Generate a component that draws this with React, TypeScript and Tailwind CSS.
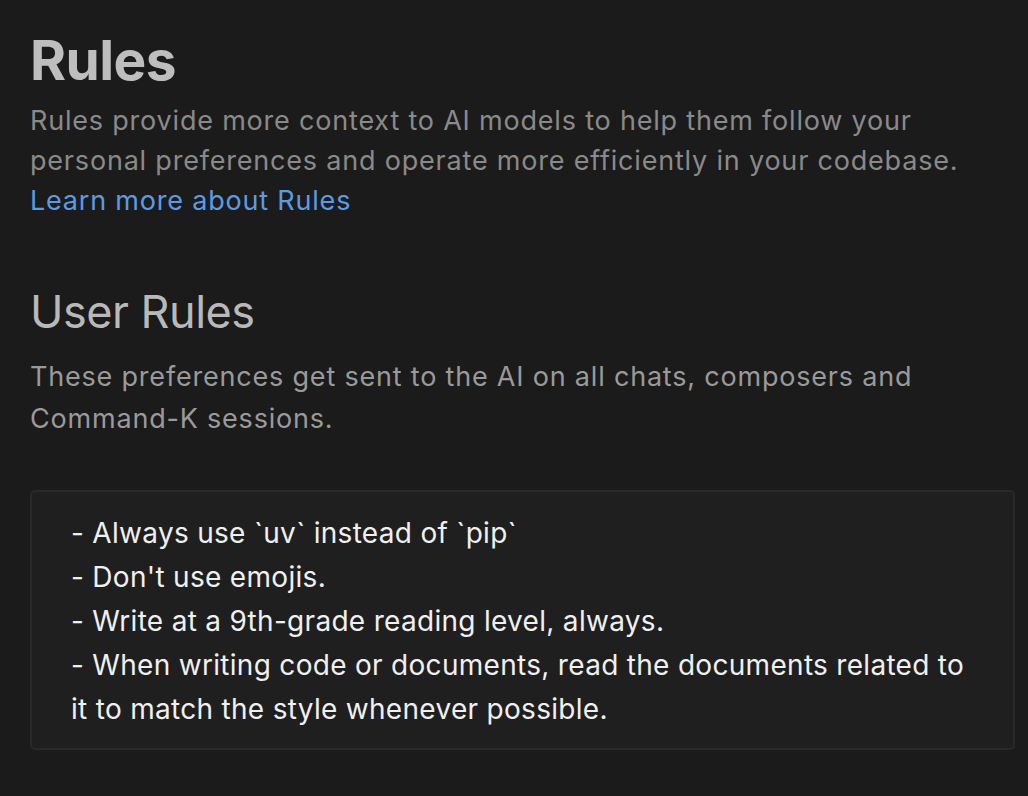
import React from "react";

const rules = [
  "- Always use `uv` instead of `pip`",
  "- Don't use emojis.",
  "- Write at a 9th-grade reading level, always.",
  "- When writing code or documents, read the documents related to it to match the style whenever possible.",
];

const App: React.FC = () => {
  return (
    <div className="min-h-screen w-full bg-[#1b1b1b] font-['Inter',sans-serif] px-[30px] pt-[22px] overflow-hidden">
      <h1 className="text-[55px] leading-[76px] font-bold text-[#bebebe] tracking-[-0.6px]">
        Rules
      </h1>
      <p className="mt-[3px] text-[27px] leading-[40px] tracking-[0.8px] text-[#8a8a8a] max-w-[960px]">
        Rules provide more context to AI models to help them follow your personal preferences and operate more efficiently in your codebase.
      </p>
      <a className="block text-[27px] leading-[40px] tracking-[0.8px] text-[#5b9be6]">Learn more about Rules</a>

      <h2 className="mt-[63px] text-[45px] leading-[56px] font-normal text-[#b9b9b9] tracking-[-0.5px]">
        User Rules
      </h2>
      <p className="mt-[16px] text-[27px] leading-[42px] tracking-[0.8px] text-[#9a9a9a] max-w-[960px]">
        These preferences get sent to the AI on all chats, composers and Command-K sessions.
      </p>

      <div className="mt-[50px] w-[985px] rounded-[5px] border-2 border-[#292929] bg-[#1f1f1f] pl-[39px] pr-[40px] pt-[19px] pb-[17px]">
        {rules.map((r) => (
          <p key={r} className="text-[28px] leading-[44px] tracking-[0.3px] text-[#f0f0f0]">
            {r}
          </p>
        ))}
      </div>
    </div>
  );
};

export default App;
